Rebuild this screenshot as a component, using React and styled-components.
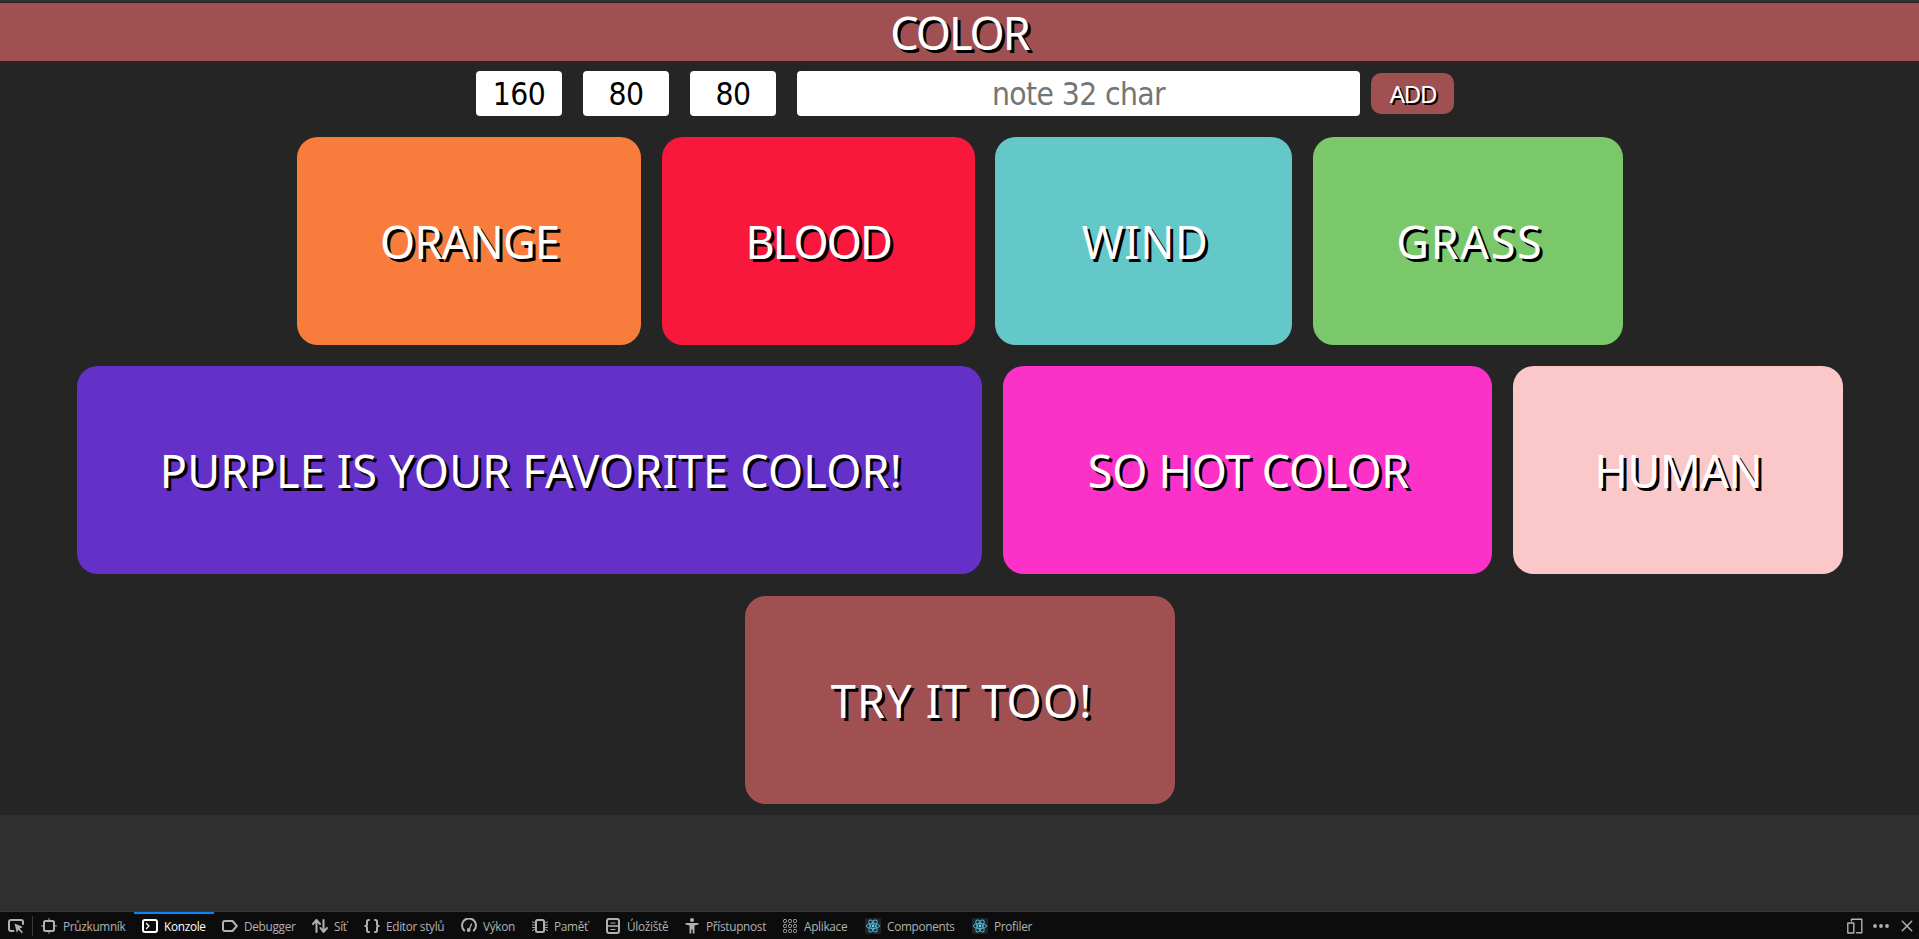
import React from "react";
import styled, { createGlobalStyle } from "styled-components";

const Global = createGlobalStyle`
  * { box-sizing: border-box; }
  html, body { margin: 0; background: #2f2f2f; overflow: hidden; }
`;

const Screen = styled.div`
  display: flex;
  flex-direction: column;
  height: 939px;
`;

const Page = styled.main`
  display: flex;
  flex-direction: column;
  height: 815px;
  background: #252525;
  border-top: 2px solid #313131;
`;

const Header = styled.header`
  display: flex;
  align-items: center;
  justify-content: center;
  height: 58px;
  margin-top: 1px;
  background: rgb(160, 80, 80);
`;

const Label = styled.span`
  padding: 2px 0 0 2px;
  margin-right: ${(p) => -(p.$spacing || 0)}px;
  font-family: "Comic Sans MS", "Noto Sans", sans-serif;
  font-size: 45px;
  line-height: 58px;
  letter-spacing: ${(p) => p.$spacing || 0}px;
  white-space: nowrap;
  color: #fff;
  text-shadow: 3px 3px 0 #000;
`;

const Form = styled.form`
  display: flex;
  align-items: center;
  height: 45px;
  margin: 10px 0 0 476px;
`;

const Field = styled.input`
  width: ${(p) => p.$width}px;
  height: 45px;
  margin: 0 ${(p) => p.$after}px 0 0;
  padding: 1px 0 0;
  border: 0;
  border-radius: 4px;
  background: #fff;
  color: #000;
  font-family: Tahoma, "DejaVu Sans Condensed", "DejaVu Sans", sans-serif;
  font-stretch: condensed;
  font-size: 31.5px;
  letter-spacing: -0.6px;
  text-align: center;
  outline: none;
  &::placeholder { color: #757575; opacity: 1; }
`;

const AddButton = styled.button`
  width: 83px;
  height: 41px;
  padding: 0 0 0 1px;
  border: 0;
  border-radius: 10px;
  background: rgb(160, 80, 80);
  color: #fff;
  font-family: "Noto Sans", sans-serif;
  font-size: 24px;
  letter-spacing: -1.3px;
  text-shadow: 2px 2px 0 #000;
`;

const Cards = styled.section`
  display: flex;
  flex-direction: column;
  gap: 21.4px;
  margin-top: 21px;
`;

const CardRow = styled.div`
  display: flex;
  justify-content: center;
  gap: 20.7px;
  height: 208px;
  padding-left: 1px;
`;

const Card = styled.div`
  display: flex;
  align-items: center;
  justify-content: center;
  width: ${(p) => p.$width}px;
  border-radius: 20.8px;
  background: ${(p) => p.$color};
`;

const Rest = styled.div`
  height: 96px;
`;

const Toolbar = styled.footer`
  display: flex;
  height: 28px;
  padding-top: 1px;
  border-top: 1px solid #38383d;
  background: #0c0c0d;
  color: #b1b1b3;
  font-family: "Segoe UI", "Open Sans", sans-serif;
  font-size: 11.8px;
`;

const Picker = styled.div`
  display: flex;
  align-items: center;
  width: 33px;
  padding-left: 8px;
`;

const Divider = styled.i`
  width: 1px;
  height: 20px;
  margin-left: 8px;
  background: #38383d;
`;

const Tab = styled.div`
  display: flex;
  align-items: center;
  gap: 6px;
  width: ${(p) => p.$width}px;
  margin-top: -1px;
  padding: 1px 0 0 8px;
  white-space: nowrap;
  letter-spacing: -0.3px;
  color: ${(p) => (p.$active ? "#fff" : "inherit")};
  box-shadow: ${(p) => (p.$active ? "inset 0 2px 0 #0a84ff" : "none")};
`;

const Tools = styled.div`
  display: flex;
  align-items: center;
  gap: 10px;
  margin-left: auto;
  padding-right: 4px;
`;

const Svg = styled.svg`
  flex: none;
  width: 16px;
  height: 16px;
  fill: none;
  stroke: currentColor;
  stroke-width: ${(p) => p.$stroke || 2};
  stroke-linecap: round;
  stroke-linejoin: round;
`;

const Icon = ({ children, stroke }) => (
  <Svg viewBox="0 0 16 16" $stroke={stroke}>{children}</Svg>
);

const Thin = styled.g`
  stroke-width: ${(p) => p.$w || 1};
`;

const ReactLogo = () => (
  <Icon stroke={1}>
    <rect width="16" height="16" rx="1" fill="#20232a" stroke="none" />
    <g stroke="#4fb3d0">
      <ellipse cx="8" cy="8" rx="6.6" ry="2.6" />
      <ellipse cx="8" cy="8" rx="6.6" ry="2.6" transform="rotate(60 8 8)" />
      <ellipse cx="8" cy="8" rx="6.6" ry="2.6" transform="rotate(120 8 8)" />
    </g>
    <circle cx="8" cy="8" r="1.4" fill="#61dafb" stroke="none" />
  </Icon>
);

const icons = {
  pick: (
    <Icon>
      <path d="M5.5 13H3a2 2 0 0 1-2-2V4a2 2 0 0 1 2-2h10a2 2 0 0 1 2 2v2" />
      <path d="M6.5 5.5l8.5 3.6-3.3 1.5 3.3 3.6-1.2 1.1-3.4-3.5-1.6 3z" fill="currentColor" stroke="none" />
    </Icon>
  ),
  inspector: (
    <Icon>
      <rect x="3" y="3" width="10" height="10" rx="1.5" />
      <Thin><path d="M8 .5V2M8 14v1.5M.5 8H2M14 8h1.5" /></Thin>
    </Icon>
  ),
  console: (
    <Icon>
      <rect x="1" y="2" width="14" height="12" rx="2" />
      <Thin $w={1.3}><path d="M4.5 5.5L7 8l-2.5 2.5" /></Thin>
    </Icon>
  ),
  debugger: (
    <Icon>
      <path d="M3 3h7.5l4.3 5-4.3 5H3a2 2 0 0 1-2-2V5a2 2 0 0 1 2-2z" />
    </Icon>
  ),
  network: (
    <Icon>
      <path d="M4.5 14V3M1 6l3.5-4L8 6M11.500 2v11M8.500 10l3 4 3.500-4" />
    </Icon>
  ),
  style: (
    <Icon>
      <path d="M5 2H4.500Q3 2 3 3.500V6Q3 8 1.300 8 3 8 3 10v2.500Q3 14 4.500 14H5M11 2h.500Q13 2 13 3.500V6q0 2 1.700 2Q13 8 13 10v2.500q0 1.500-1.500 1.500H11" />
    </Icon>
  ),
  performance: (
    <Icon>
      <path d="M3.200 12.500A7 7 0 1 1 12.800 12.500" />
      <Thin $w={1.3}><path d="M8 12l2.500-6" /></Thin>
      <circle cx="7.700" cy="12" r="1.900" fill="currentColor" stroke="none" />
    </Icon>
  ),
  memory: (
    <Icon>
      <rect x="4" y="2" width="8" height="12" rx="1.500" />
      <Thin>
        <path d="M2.500 4.500L.500 4M2.500 7H.500M2.500 9.500H.500M2.500 11.500l-2 1M13.500 4.500l2-.500M13.500 7h2M13.500 9.500h2M13.500 11.500l2 1" />
      </Thin>
    </Icon>
  ),
  storage: (
    <Icon>
      <rect x="2" y="1" width="12" height="14" rx="2" />
      <Thin $w={1.5}><path d="M2 8h12" /></Thin>
      <Thin><path d="M6 5h4M6 11.500h4" /></Thin>
    </Icon>
  ),
  accessibility: (
    <Icon>
      <circle cx="8" cy="2" r="2" fill="currentColor" stroke="none" />
      <path d="M1.500 5h13v1.600L10.500 7.500V15.500H8.700V11.500H7.300v4H5.500v-8L1.500 6.600z" fill="currentColor" stroke="none" />
    </Icon>
  ),
  application: (
    <Icon stroke={1}>
      {[1.5, 6.5, 11.5].map((y) =>
        [1.5, 6.5, 11.5].map((x) => (
          <rect key={`${x}-${y}`} x={x} y={y} width="3" height="3" rx="1" />
        ))
      )}
    </Icon>
  ),
  react: <ReactLogo />,
  responsive: (
    <Icon stroke={1.4}>
      <path d="M4.500 3V1.200H14.800V14.800H9.500" />
      <rect x=".800" y="5" width="6" height="10" />
    </Icon>
  ),
  more: (
    <Icon>
      {[2, 8, 14].map((x) => (
        <circle key={x} cx={x} cy="8" r="1.900" fill="currentColor" stroke="none" />
      ))}
    </Icon>
  ),
  close: (
    <Icon stroke={1.5}>
      <path d="M3.300 3.300l9.400 9.400M12.700 3.300l-9.400 9.400" />
    </Icon>
  ),
};

const rows = [
  [
    { text: "ORANGE", color: "rgb(248, 124, 60)", width: 344, spacing: -0.8 },
    { text: "BLOOD", color: "rgb(247, 24, 60)", width: 313, spacing: -1.95 },
    { text: "WIND", color: "rgb(101, 200, 200)", width: 297, spacing: 0.7 },
    { text: "GRASS", color: "rgb(122, 200, 106)", width: 310, spacing: 1.6 },
  ],
  [
    { text: "PURPLE IS YOUR FAVORITE COLOR!", color: "rgb(100, 48, 200)", width: 905, spacing: 0.2 },
    { text: "SO HOT COLOR", color: "rgb(252, 49, 200)", width: 489, spacing: -0.2 },
    { text: "HUMAN", color: "rgb(250, 200, 200)", width: 330, spacing: -0.45 },
  ],
  [{ text: "TRY IT TOO!", color: "rgb(160, 80, 80)", width: 430, spacing: 1.2 }],
];

const tabs = [
  ["inspector", "Průzkumník", 101],
  ["console", "Konzole", 80],
  ["debugger", "Debugger", 90],
  ["network", "Síť", 52],
  ["style", "Editor stylů", 97],
  ["performance", "Výkon", 71],
  ["memory", "Paměť", 73],
  ["storage", "Úložiště", 79],
  ["accessibility", "Přístupnost", 98],
  ["application", "Aplikace", 83],
  ["react", "Components", 107],
  ["react", "Profiler", 76],
];

export default function App() {
  return (
    <Screen>
      <Global />
      <Page>
        <Header><Label $spacing={-2}>COLOR</Label></Header>
        <Form>
          <Field $width={86} $after={21} defaultValue="160" />
          <Field $width={86} $after={21} defaultValue="80" />
          <Field $width={86} $after={21} defaultValue="80" />
          <Field $width={563} $after={11} placeholder="note 32 char" />
          <AddButton type="button">ADD</AddButton>
        </Form>
        <Cards>
          {rows.map((row, i) => (
            <CardRow key={i}>
              {row.map((c) => (
                <Card key={c.text} $width={c.width} $color={c.color}>
                  <Label $spacing={c.spacing}>{c.text}</Label>
                </Card>
              ))}
            </CardRow>
          ))}
        </Cards>
      </Page>
      <Rest />
      <Toolbar>
        <Picker>{icons.pick}<Divider /></Picker>
        {tabs.map(([icon, label, width]) => (
          <Tab key={label} $width={width} $active={icon === "console"}>
            {icons[icon]}
            {label}
          </Tab>
        ))}
        <Tools>{icons.responsive}{icons.more}{icons.close}</Tools>
      </Toolbar>
    </Screen>
  );
}
